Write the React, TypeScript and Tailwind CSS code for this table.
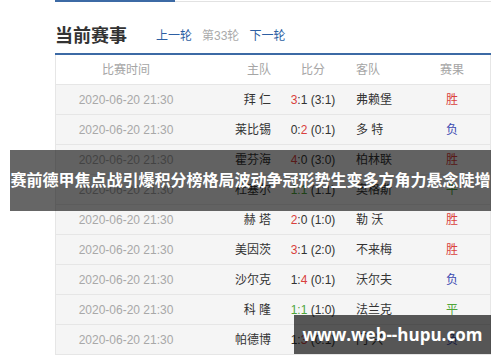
const matches = [
  { home: "拜 仁", hs: "3", as: "1", half: "(3:1)", away: "弗赖堡", res: "胜" },
  { home: "莱比锡", hs: "0", as: "2", half: "(0:1)", away: "多 特", res: "负" },
  { home: "霍芬海", hs: "4", as: "0", half: "(3:0)", away: "柏林联", res: "胜" },
  { home: "杜塞尔", hs: "1", as: "1", half: "(1:1)", away: "奥格斯", res: "平" },
  { home: "赫 塔", hs: "2", as: "0", half: "(1:0)", away: "勒 沃", res: "胜" },
  { home: "美因茨", hs: "3", as: "1", half: "(2:0)", away: "不来梅", res: "胜" },
  { home: "沙尔克", hs: "1", as: "4", half: "(0:1)", away: "沃尔夫", res: "负" },
  { home: "科 隆", hs: "1", as: "1", half: "(1:0)", away: "法兰克", res: "平" },
  { home: "帕德博", hs: "1", as: "3", half: "(0:1)", away: "门 兴", res: "负" },
];

const resColor: Record<string, string> = {
  胜: "text-[#d9413c]",
  负: "text-[#3a48b0]",
  平: "text-[#4fa53a]",
};

function Score({ m }: { m: (typeof matches)[number] }) {
  if (m.hs === m.as) {
    return (
      <span>
        <span className="text-[#4fa53a]">
          {m.hs}:{m.as}
        </span>{" "}
        {m.half}
      </span>
    );
  }
  const homeWin = Number(m.hs) > Number(m.as);
  return (
    <span>
      <span className={homeWin ? "text-[#d9413c]" : ""}>{m.hs}</span>:
      <span className={homeWin ? "" : "text-[#d9413c]"}>{m.as}</span> {m.half}
    </span>
  );
}

export default function App() {
  return (
    <div
      className="relative w-[500px] h-[362px] overflow-hidden bg-white"
      style={{ fontFamily: '"Liberation Sans", "Noto Sans CJK SC", sans-serif' }}
    >
      <div className="ml-[55px] w-[436px]">
        <div className="flex h-[2px]">
          <div className="w-[120px] bg-[#3c6aa5]" />
          <div className="flex-1 border-b border-[#e2e2e2]" />
        </div>

        <div className="flex h-[51px] items-center pt-[17px]">
          <h1 className="text-[18px] font-bold text-[#333]">当前赛事</h1>
          <div className="ml-[29px] flex gap-[10px] text-[12px]">
            <span className="text-[#2d5fa3]">上一轮</span>
            <span className="text-[#aaa]">第33轮</span>
            <span className="text-[#2d5fa3]">下一轮</span>
          </div>
        </div>

        <div className="h-[2px] bg-[#3c6aa5]" />

        <div className="border-l border-r border-[#e6e6e6] text-[12px]">
          <div className="flex h-[30px] items-center border-b border-[#e6e6e6] bg-white text-[#a5a5a5]">
            <div className="w-[140px] text-center">比赛时间</div>
            <div className="w-[75px] text-right">主队</div>
            <div className="w-[84px] text-center">比分</div>
            <div className="w-[66px] pl-[1px]">客队</div>
            <div className="w-[62px] text-center">赛果</div>
          </div>
          {matches.map((m, i) => (
            <div
              key={i}
              className="flex h-[30px] items-center border-b border-[#e6e6e6] bg-[#f5f5f5] text-[#333]"
            >
              <div className="w-[140px] text-center text-[#a8a8a8]">2020-06-20 21:30</div>
              <div className="w-[75px] text-right">{m.home}</div>
              <div className="w-[84px] text-center">
                <Score m={m} />
              </div>
              <div className="w-[66px] pl-[1px]">{m.away}</div>
              <div className={`w-[62px] text-center ${resColor[m.res]}`}>{m.res}</div>
            </div>
          ))}
        </div>
      </div>

      <div className="absolute left-[10px] top-[150px] flex h-[61px] w-[481px] items-center justify-center bg-black/60">
        <span className="whitespace-nowrap text-[16px] font-bold text-white">
          赛前德甲焦点战引爆积分榜格局波动争冠形势生变多方角力悬念陡增
        </span>
      </div>

      <div className="absolute left-[294px] top-[315px] flex h-[39px] w-[197px] items-center justify-center bg-black/65">
        <span
          className="text-[17px] font-bold text-white"
          style={{ fontFamily: '"Open Sans", "Noto Sans", sans-serif' }}
        >
          www.web--hupu.com
        </span>
      </div>
    </div>
  );
}
